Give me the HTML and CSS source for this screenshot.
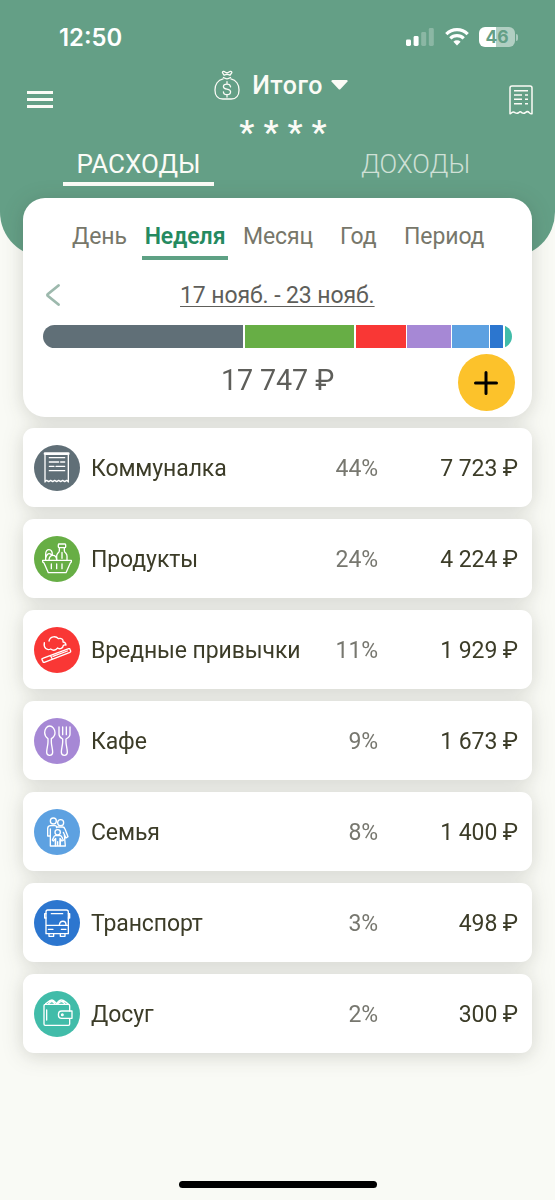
FILE: index.html
```html
<!DOCTYPE html>
<html lang="ru">
<head>
    <meta charset="UTF-8">
    <meta name="viewport" content="width=device-width, initial-scale=1.0">
    <title>Расходы</title>
    <link rel="stylesheet" href="styles.css">
</head>
<body>
    <header class="header">
        <div class="status-bar">
            <span class="clock">12:50</span>
            <div class="status-icons">
                <svg class="signal" viewBox="0 0 28 18">
                    <rect x="0" y="11.5" width="5" height="6.5" rx="1.4"/>
                    <rect x="7.6" y="8" width="5" height="10" rx="1.4"/>
                    <rect x="15.2" y="4" width="5" height="14" rx="1.4" opacity=".25"/>
                    <rect x="22.8" y="0" width="5" height="18" rx="1.4" opacity=".25"/>
                </svg>
                <svg class="wifi" viewBox="0 0 24 18">
                    <path d="M1.3 6.2a15 15 0 0 1 21.4 0" />
                    <path d="M5.3 10.4a9.4 9.4 0 0 1 13.4 0" />
                    <path class="dot" d="M12 17.4l-3.6-3.6a5.2 5.2 0 0 1 7.2 0z"/>
                </svg>
                <div class="battery"><span class="battery-level">46</span></div>
            </div>
        </div>

        <div class="toolbar">
            <svg class="menu-icon" viewBox="0 0 26 18">
                <path d="M0 1.5h26M0 8.5h26M0 15.5h26"/>
            </svg>
            <div class="account">
                <div class="account-name">
                    <svg class="bag-icon" viewBox="0 0 80 90">
                        <path d="M28 26C12 30 3 44 3 60c0 17 9 28 24 28h26c15 0 24-11 24-28 0-16-9-30-25-34"/>
                        <path d="M29 22c7 5 15 5 22 0M31 15l-5-8c0-5 5-5 8-2 4 3 8 3 12 0 3-3 9-3 9 2l-6 8c-5-3-12-3-18 0z"/>
                        <path d="M51 51c-1-7-5-9-11-9s-11 3-11 8c0 11 22 5 22 16 0 6-5 9-11 9s-11-3-11-9M40 35v7M40 75v7"/>
                    </svg>
                    <span>Итого</span>
                    <svg class="caret" viewBox="0 0 17 10">
                        <path d="M1.5 0h14q1.5 0 1 1.4L9.5 9q-1 1-2 0L.5 1.6Q0 0 1.5 0z"/>
                    </svg>
                </div>
                <div class="hidden-sum">****</div>
            </div>
            <svg class="receipt-icon" viewBox="0 0 72 90">
                <path d="M3 86V9q0-6 6-6h54q6 0 6 6v77q-4 1-8-3-6-6-12 0-5 4-11 0-4-5-9 0-5 4-11 0-6-5-11 1-2 2-4 2z"/>
                <path class="lines" d="M15 17h42M15 30h24M48 30h9M15 43h24M48 43h9M15 56h24M48 56h9"/>
            </svg>
        </div>

        <nav class="main-tabs">
            <a class="main-tab active">РАСХОДЫ</a>
            <a class="main-tab">ДОХОДЫ</a>
        </nav>
    </header>

    <main class="content">
        <section class="summary">
            <nav class="period-tabs">
                <a class="day">День</a>
                <a class="week active">Неделя</a>
                <a class="month">Месяц</a>
                <a class="year">Год</a>
                <a class="period">Период</a>
            </nav>
            <div class="date-row">
                <svg class="arrow" viewBox="0 0 14 22">
                    <path d="M12.5 1.5L2 10q-1 1 0 2l10.5 8.5"/>
                </svg>
                <span class="date-range">17 нояб. - 23 нояб.</span>
            </div>
            <div class="chart">
                <div class="utilities" style="flex-grow: 200.5"></div>
                <div class="grocery" style="flex-grow: 109.5"></div>
                <div class="habits" style="flex-grow: 50"></div>
                <div class="cafe" style="flex-grow: 43.5"></div>
                <div class="family" style="flex-grow: 36.5"></div>
                <div class="transport" style="flex-grow: 13"></div>
                <div class="leisure" style="flex-grow: 7.5"></div>
            </div>
            <div class="total-row">
                <span class="total">17 747 ₽</span>
                <button class="add-button" aria-label="Добавить">
                    <svg viewBox="0 0 24 24"><path d="M12 1.5v21M1.5 12h21"/></svg>
                </button>
            </div>
        </section>

        <div class="row">
            <svg class="icon utilities" viewBox="0 0 138 138">
                <path d="M33 111V28M103 111V28M33 24h70q2 0 2 2t-2 2H33q-2 0-2-2t2-2zM33 110l5-4 6 4 6-4 6 4 6-4 6 4 6-4 6 4 6-4 6 4 6-4 5 4"/>
                <path d="M46 38h46M46 51h28M80 51h12M46 64h14M66 64h26M46 77h46"/>
            </svg>
            <span class="name">Коммуналка</span>
            <span class="percent">44%</span>
            <span class="amount">7 723 ₽</span>
        </div>
        <div class="row">
            <svg class="icon grocery" viewBox="0 0 138 138">
                <path d="M26 73h86v5l-3 3-13 29H43L30 81l-4-3zM52 84v14M68 84v14M84 84v14"/>
                <path d="M74 24h19q2 0 2 3v5q0 3-3 3H76q-3 0-3-3v-5q0-3 1-3zM76 36v8q0 4-4 7-4 4-4 9v12M91 36v8q0 4 4 7 4 4 4 9v12M84 49v18"/>
                <path d="M35 71V54c0-18 20-18 20 2M35 66c4-14 10-16 18-9M45 71c2-16 21-18 23 0"/>
            </svg>
            <span class="name">Продукты</span>
            <span class="percent">24%</span>
            <span class="amount">4 224 ₽</span>
        </div>
        <div class="row">
            <svg class="icon habits" viewBox="0 0 138 138">
                <path d="M26 94l78-29q3-1 4 2l2 5q1 3-2 4l-77 30q-3 1-4-2l-3-6q-1-3 2-4zM50 86l5 11M57 88l43-16"/>
                <path d="M31 47c-3 17 8 24 19 19 8 6 16 3 21-3 7 5 16 1 17-8 3-2 5-2 8-1-1-6-5-9-9-9 2-8-5-13-14-10-7-9-25-8-28 7"/>
            </svg>
            <span class="name">Вредные привычки</span>
            <span class="percent">11%</span>
            <span class="amount">1 929 ₽</span>
        </div>
        <div class="row">
            <svg class="icon cafe" viewBox="0 0 138 138">
                <path d="M47 24c-9 0-15 10-15 20 0 9 5 14 10 18v10c0 10-4 20-4 31 0 12 18 12 18 0 0-11-4-21-4-31V62c6-4 11-9 11-18 0-10-7-20-16-20z"/>
                <path d="M75 27v22c0 8 5 11 11 14v9c0 10-4 20-4 31 0 12 18 12 18 0 0-11-4-21-4-31v-9c6-3 12-6 12-14V27M86 27v23M97 27v23"/>
            </svg>
            <span class="name">Кафе</span>
            <span class="percent">9%</span>
            <span class="amount">1 673 ₽</span>
        </div>
        <div class="row">
            <svg class="icon family" viewBox="0 0 138 138">
                <circle cx="58" cy="36" r="9"/>
                <circle cx="80" cy="41" r="9"/>
                <circle cx="71" cy="70" r="8"/>
                <path d="M49 111V81h-8V59q0-9 9-9h13q5 0 5 6M49 60v51h15V94M67 54h19q5 0 7 6l9 23-6 4-8-17M91 78l3 33H79V94"/>
                <path d="M64 80h15q4 1 5 5l4 9-4 2-6-8v23H65V88l-7 8-3-3 4-8q2-5 5-5zM71 98v13"/>
            </svg>
            <span class="name">Семья</span>
            <span class="percent">8%</span>
            <span class="amount">1 400 ₽</span>
        </div>
        <div class="row">
            <svg class="icon transport" viewBox="0 0 138 138">
                <path d="M41 30h56q6 0 6 6v65H36V36q0-6 5-6zM52 41h34M36 76h67M43 88h14M82 88h14"/>
                <path d="M36 41h-4v13h4M103 41h4v13h-4M45 101v8h14v-8M79 101v8h14v-8M76 75c2-15 20-15 20 0"/>
            </svg>
            <span class="name">Транспорт</span>
            <span class="percent">3%</span>
            <span class="amount">498 ₽</span>
        </div>
        <div class="row">
            <svg class="icon leisure" viewBox="0 0 138 138">
                <path d="M107 60V44q0-4-4-4H34q-4 0-4 4v55q0 4 4 4h69q4 0 4-4V83M38 57v30"/>
                <path d="M83 60h31v22H83c-13 0-13-22 0-22zM35 38c6-4 11-10 19-11 6 0 9 6 14 11 4-6 9-11 14-11 8 0 13 7 20 11M44 38c7-8 12-9 18 0M72 38c7-8 13-9 20 0"/>
                <circle cx="85" cy="71" r="2.5"/>
            </svg>
            <span class="name">Досуг</span>
            <span class="percent">2%</span>
            <span class="amount">300 ₽</span>
        </div>
    </main>

    <footer class="home-indicator"></footer>
</body>
</html>
```
FILE: styles.css
```css
* {
    box-sizing: border-box;
}
body {
    margin: 0;
    height: 1200px;
    display: flex;
    flex-direction: column;
    background-color: #f9faf5;
    font-family: Roboto, "Noto Sans", sans-serif;
    font-size: 23px;
    color: #3c3c28;
    overflow: hidden;
}
svg {
    display: block;
    flex-shrink: 0;
    fill: none;
    stroke-linecap: round;
    stroke-linejoin: round;
}

/* header */
.header {
    height: 257px;
    flex-shrink: 0;
    background-color: #649f86;
    border-radius: 0 0 45px 45px;
    color: #fbfbf6;
}
.status-bar {
    display: flex;
    justify-content: space-between;
    align-items: center;
    height: 70px;
    padding: 4px 37px 0 59px;
}
.clock {
    font-family: Inter, sans-serif;
    font-size: 23.8px;
    font-weight: 600;
    color: #fff;
}
.status-icons {
    display: flex;
    align-items: center;
}
.signal {
    width: 28px;
    height: 18px;
    fill: #fff;
    margin-right: 11px;
}
.wifi {
    width: 24px;
    height: 18px;
    stroke: #fff;
    stroke-width: 3.2;
    stroke-linecap: butt;
    margin-right: 10px;
}
.wifi .dot {
    fill: #fff;
    stroke: none;
}
.battery {
    display: flex;
    align-items: center;
    width: 39px;
}
.battery::after {
    content: "";
    width: 2px;
    height: 7px;
    margin-left: 1px;
    border-radius: 0 2px 2px 0;
    background-color: #a9cabd;
}
.battery-level {
    width: 36px;
    height: 20px;
    border-radius: 6px;
    background: linear-gradient(90deg, #fff 47%, #b1cfc2 47%);
    color: #649f86;
    font: 700 17.5px/20px Inter, sans-serif;
    text-align: center;
}
.toolbar {
    display: flex;
    justify-content: space-between;
    height: 77px;
    padding: 0 22px 0 27px;
}
.menu-icon {
    width: 26px;
    height: 18px;
    margin-top: 21px;
    stroke: #fbfbf6;
    stroke-width: 3;
    stroke-linecap: butt;
}
.account {
    display: flex;
    flex-direction: column;
    align-items: center;
    width: 160px;
}
.account-name {
    display: flex;
    align-items: center;
    height: 30px;
    font-size: 25px;
    font-weight: 500;
    letter-spacing: 0.5px;
}
.bag-icon {
    width: 26px;
    height: 30px;
    margin-right: 12px;
    stroke: #fbfbf6;
    stroke-width: 4;
}
.caret {
    width: 17px;
    height: 10px;
    margin-left: 8px;
    fill: #fbfbf6;
}
.hidden-sum {
    margin-top: 12px;
    font-size: 34px;
    line-height: 40px;
    font-weight: 500;
    letter-spacing: 9px;
    padding-left: 13px;
}
.receipt-icon {
    width: 24px;
    height: 30px;
    margin-top: 15px;
    stroke: #fbfbf6;
    stroke-width: 4.5;
}
.receipt-icon .lines {
    stroke-linecap: butt;
}
.main-tabs {
    display: flex;
    justify-content: space-between;
    padding: 0 64px 0 63px;
}
.main-tab {
    height: 39px;
    width: 151px;
    font-size: 26px;
    line-height: 34px;
    text-align: center;
    color: #cfe0d6;
    font-weight: 300;
}
.main-tab.active {
    color: #fbfbf6;
    font-weight: 400;
    border-bottom: 4px solid #fbfbf6;
}

/* cards */
.content {
    display: flex;
    flex-direction: column;
    gap: 11.6px;
    margin: -59.5px 23px 0;
    letter-spacing: -0.1px;
    filter: drop-shadow(0 3px 10px rgba(40, 40, 30, 0.18));
}
.summary {
    height: 219px;
    border-radius: 22px;
    background-color: #fff;
}
.period-tabs {
    display: flex;
    padding: 17px 0 0 49px;
    height: 62.5px;
    color: #77776a;
    line-height: 43px;
}
.period-tabs a {
    flex-shrink: 0;
    white-space: nowrap;
}
.period-tabs .day {
    width: 70px;
}
.period-tabs .week {
    width: 86px;
    text-align: center;
    margin-right: 15px;
}
.period-tabs .active {
    font-weight: 600;
    color: #258a60;
    border-bottom: 4px solid #5ea184;
}
.period-tabs .month {
    width: 97px;
}
.period-tabs .year {
    width: 64px;
}
.date-row {
    display: flex;
    align-items: center;
    height: 65px;
    padding: 5px 0 0 23px;
}
.arrow {
    width: 14px;
    height: 22px;
    stroke: #9db9ad;
    stroke-width: 2.8;
}
.date-range {
    margin-left: 120px;
    color: #5e5e5a;
    text-decoration: underline;
    text-decoration-thickness: 1px;
    text-underline-offset: 3px;
}
.chart {
    display: flex;
    gap: 1.5px;
    height: 23px;
    margin: 0 20px;
    border-radius: 11.5px;
    overflow: hidden;
}
.total-row {
    display: flex;
    align-items: flex-start;
    justify-content: flex-end;
    padding: 6px 17px 0 0;
}
.total {
    width: 115px;
    margin: 8px 122px 0 0;
    font-size: 28.7px;
    line-height: 36px;
    color: #5e5e5a;
    white-space: nowrap;
}
.add-button {
    display: flex;
    align-items: center;
    justify-content: center;
    width: 57px;
    height: 57px;
    padding: 0;
    border: none;
    border-radius: 50%;
    background-color: #fcc22b;
}
.add-button svg {
    width: 24px;
    height: 24px;
    margin-right: 1px;
    stroke: #000;
    stroke-width: 3;
}
.row {
    display: flex;
    align-items: center;
    height: 79.4px;
    padding: 0 14px 0 11px;
    border-radius: 11px;
    background-color: #fff;
}
.icon {
    width: 46px;
    height: 46px;
    border-radius: 50%;
    stroke: #fff;
    stroke-width: 4;
}
.name {
    flex: 1;
    margin-left: 11px;
}
.name,
.percent,
.amount {
    padding-top: 2px;
}
.percent {
    color: #77776f;
}
.amount {
    width: 140px;
    text-align: right;
}

/* category colors */
.utilities {
    background-color: #606f77;
}
.grocery {
    background-color: #67ae45;
}
.habits {
    background-color: #f93735;
}
.cafe {
    background-color: #a688d5;
}
.family {
    background-color: #5da1e1;
}
.transport {
    background-color: #2c76cf;
}
.leisure {
    background-color: #41bca9;
}

.home-indicator {
    width: 198px;
    height: 7px;
    margin: auto auto 12px;
    border-radius: 4px;
    background-color: #000;
}
```
